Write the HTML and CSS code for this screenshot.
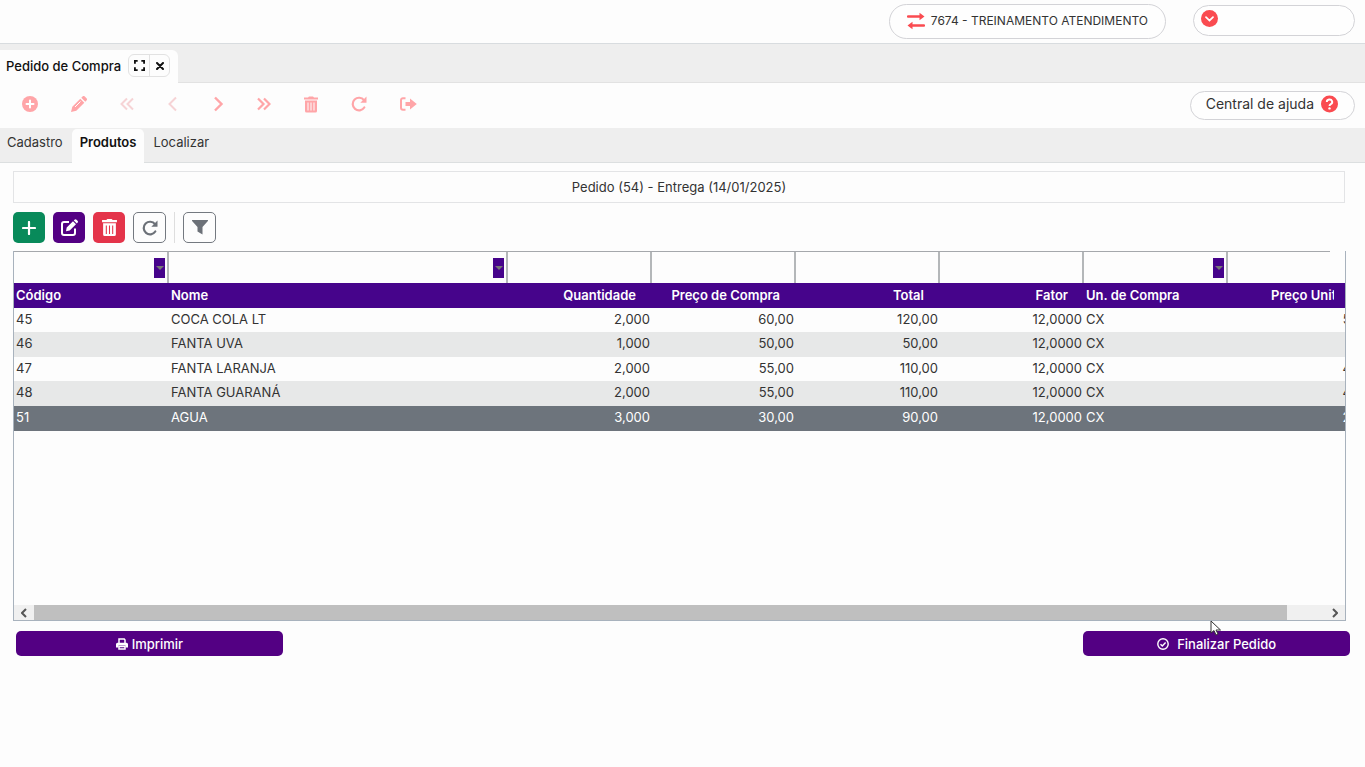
FILE: index.html
```html
<!DOCTYPE html>
<html lang="pt-BR">
<head>
  <meta charset="UTF-8">
  <meta name="viewport" content="width=device-width, initial-scale=1.0">
  <title>Pedido de Compra</title>
  <link rel="stylesheet" href="styles.css">
</head>
<body>
  <svg class="sprite" aria-hidden="true">
    <symbol id="i-trash" viewBox="0 0 14 16">
      <path fill="currentColor" fill-rule="evenodd" d="M0 1h4l1-1h4l1 1h4v2H0zM1 4h12v10.500a1.500 1.500 0 0 1-1.500 1.500h-9A1.500 1.500 0 0 1 1 14.500zM3.500 6v8h1V6zm3 0v8h1V6zm3 0v8h1V6z"/>
    </symbol>
    <symbol id="i-redo" viewBox="0 0 16 16">
      <path fill="none" stroke="currentColor" stroke-width="2.200" stroke-linecap="round" d="M13.300 11.500A6.300 6.300 0 1 1 13 4.200"/>
      <path fill="currentColor" d="M15.500.5v6.200H9.300z"/>
    </symbol>
  </svg>

  <header class="topbar">
    <button class="pill company" type="button">
      <svg width="18" height="18" viewBox="0 0 18 18" aria-hidden="true">
        <path d="M1 4.500h13M4 13.500h13" stroke="currentColor" stroke-width="2.400" stroke-linecap="round"/>
        <path d="M12.500.8 17.500 4.500l-5 3.700zM5.500 9.800.5 13.500l5 3.700z" fill="currentColor"/>
      </svg>
      <span>7674 - TREINAMENTO ATENDIMENTO</span>
    </button>
    <button class="pill user" type="button" aria-label="Usuário">
      <svg width="17" height="17" viewBox="0 0 17 17" aria-hidden="true">
        <circle cx="8.500" cy="8.500" r="8.500" fill="currentColor"/>
        <path d="m5 7.200 3.500 3.400L12 7.200" fill="none" stroke="#fff" stroke-width="1.800" stroke-linecap="round"/>
      </svg>
    </button>
  </header>

  <nav class="windows">
    <div class="window-tab">
      <span>Pedido de Compra</span>
      <div class="window-actions">
        <button type="button" aria-label="Expandir">
          <svg width="11" height="11" viewBox="0 0 12 12" aria-hidden="true"><path d="M1 4V1h3M8 1h3v3M11 8v3H8M4 11H1V8" fill="none" stroke="currentColor" stroke-width="2"/></svg>
        </button>
        <button type="button" aria-label="Fechar">
          <svg width="8" height="8" viewBox="0 0 8 8" aria-hidden="true"><path d="m1 1 6 6M7 1 1 7" stroke="currentColor" stroke-width="2" stroke-linecap="round"/></svg>
        </button>
      </div>
    </div>
  </nav>

  <div class="toolbar">
    <div class="tools">
      <button type="button" aria-label="Novo">
        <svg width="16" height="16" viewBox="0 0 16 16"><circle cx="8" cy="8" r="8" fill="currentColor"/><path d="M8 4.500v7M4.500 8h7" stroke="#fff" stroke-width="2" stroke-linecap="round"/></svg>
      </button>
      <button type="button" aria-label="Editar">
        <svg width="16" height="16" viewBox="0 0 16 16"><path d="M9.300 2.700 1.300 10.700 0 16l5.300-1.300 8-8zM10.300 1.700l1.200-1.200a1.600 1.600 0 0 1 2.300 0l1.700 1.700a1.600 1.600 0 0 1 0 2.300l-1.200 1.200z" fill="currentColor"/><path d="m4 11 5.500-5.500" stroke="#fff"/></svg>
      </button>
      <button class="off" type="button" aria-label="Primeiro" disabled>
        <svg width="14" height="16" viewBox="0 0 14 16"><path d="M7 2.500 1.500 8 7 13.500M13 2.500 7.500 8l5.500 5.500" fill="none" stroke="currentColor" stroke-width="2"/></svg>
      </button>
      <button class="off" type="button" aria-label="Anterior" disabled>
        <svg width="12" height="16" viewBox="-1 0 12 16"><path d="M8 1.500 1.500 8 8 14.500" fill="none" stroke="currentColor" stroke-width="2"/></svg>
      </button>
      <button type="button" aria-label="Próximo">
        <svg width="12" height="16" viewBox="-1 0 12 16"><path d="M2 1.500 8.500 8 2 14.500" fill="none" stroke="currentColor" stroke-width="2.400"/></svg>
      </button>
      <button type="button" aria-label="Último">
        <svg width="14" height="16" viewBox="0 0 14 16"><path d="M1 2.500 6.500 8 1 13.500M7 2.500 12.500 8 7 13.500" fill="none" stroke="currentColor" stroke-width="2.200"/></svg>
      </button>
      <button type="button" aria-label="Excluir"><svg width="14" height="17"><use href="#i-trash"/></svg></button>
      <button type="button" aria-label="Atualizar"><svg width="16" height="16"><use href="#i-redo"/></svg></button>
      <button type="button" aria-label="Sair">
        <svg width="17" height="14" viewBox="0 0 17 14"><path d="M5.500 1.200H3a2 2 0 0 0-2 2v7.600a2 2 0 0 0 2 2h2.500" fill="none" stroke="currentColor" stroke-width="2"/><path d="M5.500 5H10V1.500L16.800 7 10 12.500V9H5.500z" fill="currentColor"/></svg>
      </button>
    </div>
    <a class="pill help" href="#">
      <span>Central de ajuda</span>
      <svg width="17" height="18" viewBox="0 0 17 18" aria-hidden="true">
        <circle cx="8.500" cy="9" r="8.500" fill="currentColor"/>
        <path d="M5.800 7a2.700 2.500 0 1 1 4 2.200c-.9.500-1.300.8-1.300 1.700" fill="none" stroke="#fff" stroke-width="1.900"/>
        <circle cx="8.500" cy="13.400" r="1.200" fill="#fff"/>
      </svg>
    </a>
  </div>

  <nav class="tabs">
    <a href="#">Cadastro</a>
    <a class="active" href="#">Produtos</a>
    <a href="#">Localizar</a>
  </nav>

  <main>
    <div class="caption">Pedido (54) - Entrega (14/01/2025)</div>

    <div class="actions">
      <button class="btn add" type="button" aria-label="Adicionar">
        <svg width="14" height="14" viewBox="0 0 14 14"><path d="M7 1v12M1 7h12" stroke="currentColor" stroke-width="2.200" stroke-linecap="round"/></svg>
      </button>
      <button class="btn edit" type="button" aria-label="Editar item">
        <svg width="17" height="17" viewBox="0 0 17 17"><path d="M8 3H3a2 2 0 0 0-2 2v9a2 2 0 0 0 2 2h9a2 2 0 0 0 2-2V9.500" fill="none" stroke="currentColor" stroke-width="2"/><path d="m12 2.200 3 3-6.300 6.300-3.700.7.700-3.700zM12.800 1.400l.7-.7a1.400 1.400 0 0 1 2 0l1 1a1.400 1.400 0 0 1 0 2l-.7.700z" fill="currentColor"/></svg>
      </button>
      <button class="btn remove" type="button" aria-label="Excluir item"><svg width="15" height="17"><use href="#i-trash"/></svg></button>
      <button class="btn outline" type="button" aria-label="Atualizar itens"><svg width="16" height="16"><use href="#i-redo"/></svg></button>
      <span class="divider"></span>
      <button class="btn outline" type="button" aria-label="Filtrar">
        <svg width="16" height="15" viewBox="0 0 16 15"><path d="M.5 0h15a.5.500 0 0 1 .4.900L10.500 7v7.500L5.500 11.500V7L.1.900A.5.500 0 0 1 .5 0z" fill="currentColor"/></svg>
      </button>
    </div>

    <section class="grid">
      <div class="filters">
        <div class="c-code"><input type="text" aria-label="Filtro Código"><button type="button" aria-label="Opções Código"></button></div>
        <div class="c-name"><input type="text" aria-label="Filtro Nome"><button type="button" aria-label="Opções Nome"></button></div>
        <div class="c-num"><input type="text" aria-label="Filtro Quantidade"></div>
        <div class="c-num"><input type="text" aria-label="Filtro Preço de Compra"></div>
        <div class="c-num"><input type="text" aria-label="Filtro Total"></div>
        <div class="c-num"><input type="text" aria-label="Filtro Fator"></div>
        <div class="c-num"><input type="text" aria-label="Filtro Un. de Compra"><button type="button" aria-label="Opções Un. de Compra"></button></div>
        <div class="c-num"><input type="text" aria-label="Filtro Preço Unitário"></div>
      </div>
      <div class="rows">
        <table>
          <colgroup>
            <col class="c-code"><col class="c-name"><col class="c-num"><col class="c-num">
            <col class="c-num"><col class="c-num"><col class="c-num"><col class="c-num">
          </colgroup>
          <thead>
            <tr>
              <th>Código</th><th>Nome</th><th class="num">Quantidade</th><th class="num">Preço de Compra</th>
              <th class="num">Total</th><th class="num">Fator</th><th>Un. de Compra</th><th class="last"><span>Preço Unitário</span></th>
            </tr>
          </thead>
          <tbody>
            <tr><td>45</td><td>COCA COLA LT</td><td class="num">2,000</td><td class="num">60,00</td><td class="num">120,00</td><td class="num">12,0000</td><td>CX</td><td class="num">5,00</td></tr>
            <tr><td>46</td><td>FANTA UVA</td><td class="num">1,000</td><td class="num">50,00</td><td class="num">50,00</td><td class="num">12,0000</td><td>CX</td><td class="num">4,17</td></tr>
            <tr><td>47</td><td>FANTA LARANJA</td><td class="num">2,000</td><td class="num">55,00</td><td class="num">110,00</td><td class="num">12,0000</td><td>CX</td><td class="num">4,58</td></tr>
            <tr><td>48</td><td>FANTA GUARANÁ</td><td class="num">2,000</td><td class="num">55,00</td><td class="num">110,00</td><td class="num">12,0000</td><td>CX</td><td class="num">4,58</td></tr>
            <tr class="selected"><td>51</td><td>AGUA</td><td class="num">3,000</td><td class="num">30,00</td><td class="num">90,00</td><td class="num">12,0000</td><td>CX</td><td class="num">2,50</td></tr>
          </tbody>
        </table>
      </div>
      <div class="scrollbar">
        <button type="button" aria-label="Rolar para a esquerda"><svg width="6" height="10" viewBox="0 0 6 10"><path d="M5 1 1 5l4 4" fill="none" stroke="currentColor" stroke-width="2"/></svg></button>
        <span class="thumb"></span>
        <button type="button" aria-label="Rolar para a direita"><svg width="6" height="10" viewBox="0 0 6 10"><path d="m1 1 4 4-4 4" fill="none" stroke="currentColor" stroke-width="2"/></svg></button>
      </div>
    </section>

    <footer>
      <button class="wide" type="button">
        <svg width="12" height="12" viewBox="0 0 12 12" aria-hidden="true"><path d="M3 5V1h5.200L9 2v3M3 8.500h6V11H3z" fill="none" stroke="currentColor" stroke-width="1.500"/><path d="M1.500 4.800h9A1.500 1.500 0 0 1 12 6.300V9.500H9.500v-2h-7v2H0V6.300a1.500 1.500 0 0 1 1.500-1.500z" fill="currentColor"/></svg>
        Imprimir
      </button>
      <button class="wide finish" type="button">
        <svg width="12" height="12" viewBox="0 0 12 12" aria-hidden="true"><circle cx="6" cy="6" r="5.200" fill="none" stroke="currentColor" stroke-width="1.400"/><path d="m3.500 6.200 1.800 1.700 3.300-3.500" fill="none" stroke="currentColor" stroke-width="1.400"/></svg>
        Finalizar Pedido
      </button>
    </footer>
  </main>

  <svg class="cursor" width="12" height="16" viewBox="0 0 12 16" aria-hidden="true"><path d="M1 1v12l3-2.500 2 4.500 2-1-2-4h4.500z" fill="#fff" stroke="#333"/></svg>
</body>
</html>
```
FILE: styles.css
```css
* {
  box-sizing: border-box;
}
body {
  margin: 0;
  background: #fdfdfd;
  color: #333;
  font: 13px/18px Inter, sans-serif;
}
button, input {
  margin: 0;
  padding: 0;
  border: 0;
  background: none;
  color: inherit;
  font: inherit;
}
a {
  color: inherit;
  text-decoration: none;
}
svg {
  display: block;
  flex: none;
}
.sprite {
  position: absolute;
  width: 0;
  height: 0;
}

/* top */
.topbar {
  display: flex;
  justify-content: flex-end;
  align-items: flex-start;
  gap: 27px;
  height: 44px;
  padding: 4px 10px 0;
  border-bottom: 1px solid #d8dcdf;
}
.pill {
  display: flex;
  align-items: center;
  border: 1px solid #d3d3d7;
  border-radius: 18px;
  background: #fefefe;
}
.pill svg {
  color: #fa4b50;
}
.company {
  gap: 6px;
  height: 35px;
  padding: 0 17px 2px;
  font-size: 12px;
}
.user {
  width: 162px;
  height: 31px;
  margin-top: 1px;
  padding: 0 7px 4px;
}
.windows {
  display: flex;
  align-items: flex-end;
  height: 39px;
  background: #eee;
  border-bottom: 1px solid #e2e2e2;
}
.window-tab {
  display: flex;
  align-items: center;
  gap: 7px;
  height: 33px;
  margin-bottom: -1px;
  padding: 0 8px 2px 6px;
  border-radius: 0 6px 0 0;
  background: #fdfdfd;
  color: #111;
  font-weight: 500;
}
.window-actions {
  display: flex;
  border: 1px solid #e2e2e2;
  border-radius: 6px;
}
.window-actions button {
  display: flex;
  align-items: center;
  justify-content: center;
  width: 20px;
  height: 21px;
}
.window-actions button + button {
  border-left: 1px solid #e2e2e2;
}

.toolbar {
  display: flex;
  align-items: center;
  justify-content: space-between;
  height: 45px;
  padding: 0 10px 0 22px;
}
.tools {
  display: flex;
  align-items: center;
  gap: 33px;
  padding-bottom: 3px;
  color: #ffa5a8;
}
.tools .off {
  color: #f6d3d5;
}
.help {
  gap: 7px;
  height: 29px;
  padding: 0 16px 3px 15px;
  font-size: 14px;
}

.tabs {
  display: flex;
  align-items: flex-end;
  height: 35px;
  background: #eee;
  border-bottom: 1px solid #dcdfe0;
}
.tabs a {
  height: 34px;
  padding: 5px 9px 0;
}
.tabs a:first-child {
  padding-left: 7px;
}
.tabs .active {
  margin-bottom: -1px;
  padding: 4px 8px 0;
  border-radius: 5px 5px 0 0;
  background: #fdfdfd;
  color: #111;
  font-weight: 600;
}

/* content */
main {
  padding: 8px 15px 0 13px;
}
.caption {
  height: 32px;
  margin-right: 5px;
  border: 1px solid #e3e4e6;
  line-height: 30px;
  text-align: center;
}
.actions {
  display: flex;
  gap: 8px;
  padding: 9px 0 8px;
}
.btn {
  display: flex;
  align-items: center;
  justify-content: center;
  width: 32px;
  height: 31px;
  border-radius: 5px;
  color: #fff;
}
.add {
  background: #088a5a;
}
.edit {
  background: #530083;
}
.remove {
  background: #e4344a;
}
.outline {
  width: 33px;
  border: 1px solid #747980;
  color: #6c7178;
}
.divider {
  width: 1px;
  background: #dedede;
}

.grid {
  margin-right: 4px;
  border: 1px solid #a8b2bd;
  border-top: 0;
}
.filters {
  display: flex;
  height: 32px;
  margin-right: 15px;
  border-top: 1px solid #a5a8ac;
  overflow: hidden;
}
.filters div {
  display: flex;
  flex: none;
  align-items: center;
  padding-right: 2px;
  border-right: 2px solid #b4b7b9;
}
.filters div:last-child {
  border-right: 0;
}
.filters input {
  flex: 1;
  min-width: 0;
  height: 30px;
  outline: 0;
}
.filters button {
  width: 11px;
  height: 20px;
  background: #46048b;
}
.filters button::before {
  content: "";
  display: block;
  margin: 0 2px;
  border: 4px solid transparent;
  border-top-color: #777;
  border-bottom: 0;
}
.c-code {
  width: 155px;
}
.c-name {
  width: 339px;
}
.c-num {
  width: 144px;
}
.rows {
  height: 322px;
  overflow: hidden;
}
table {
  width: 1358px;
  table-layout: fixed;
  border-collapse: collapse;
}
th, td {
  padding: 0 2px;
  line-height: 22px;
  text-align: left;
  vertical-align: top;
  white-space: nowrap;
}
th {
  height: 25px;
  background: #46048b;
  color: #fff;
  font-weight: 600;
  line-height: 25px;
}
.num {
  text-align: right;
}
th.num {
  padding-right: 16px;
}
.last span {
  display: block;
  margin: 0 36px 0 41px;
  overflow: hidden;
}
tbody tr {
  height: 24px;
}
tbody tr:nth-child(even) {
  height: 25px;
  background: #e7e8e8;
}
tbody .selected {
  height: 25px;
  background: #6d747c;
  color: #fff;
}

.scrollbar {
  display: flex;
  height: 15px;
  background: #f0f0f0;
}
.scrollbar button {
  display: flex;
  align-items: center;
  justify-content: center;
  width: 20px;
  color: #555;
}
.scrollbar .thumb {
  flex: 1;
  margin-right: 38px;
  background: #bfbfbf;
}

footer {
  display: flex;
  justify-content: space-between;
  padding: 10px 0 0 3px;
}
.wide {
  display: flex;
  align-items: center;
  justify-content: center;
  gap: 4px;
  width: 20%;
  height: 25px;
  border-radius: 5px;
  background: #530083;
  color: #fff;
  font-weight: 500;
}
.finish {
  gap: 8px;
}

.cursor {
  position: absolute;
  left: 1210px;
  top: 620px;
}
```
